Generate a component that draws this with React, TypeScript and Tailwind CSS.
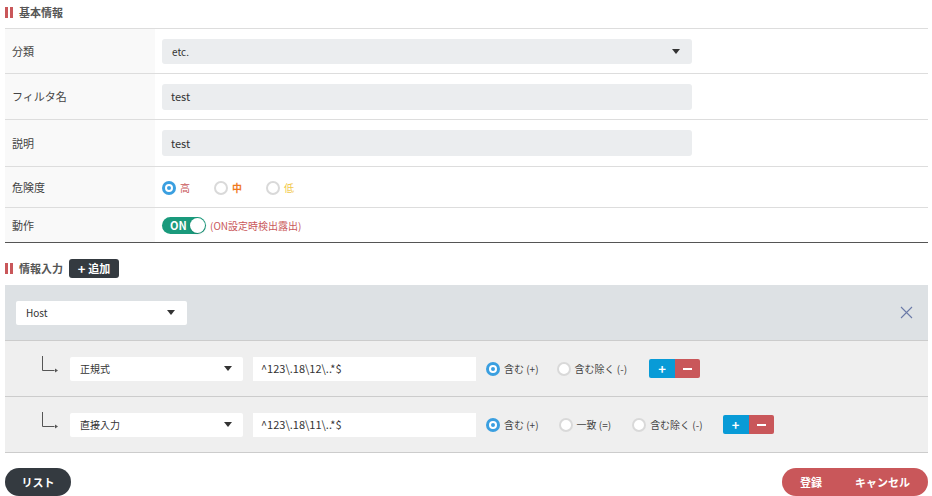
import React from "react";

const font = { fontFamily: '"Noto Sans CJK JP", "Noto Sans", sans-serif' };

function SectionTitle({ children }: { children: React.ReactNode }) {
  return (
    <div className="flex items-center gap-[6px] text-[11px] font-bold text-[#555]">
      <span className="flex gap-[2px]">
        <span className="block h-[11px] w-[3px] bg-[#c9575a]" />
        <span className="block h-[11px] w-[3px] bg-[#c9575a]" />
      </span>
      {children}
    </div>
  );
}

function Caret() {
  return (
    <svg width="8" height="5" viewBox="0 0 8 5">
      <path d="M0 0h8L4 5z" fill="#333" />
    </svg>
  );
}

function Radio({ on, label, color }: { on?: boolean; label: string; color?: string }) {
  return (
    <label className="flex items-center gap-[4px]">
      {on ? (
        <span className="flex h-[14px] w-[14px] items-center justify-center rounded-full bg-[#3a9fe0]">
          <span className="h-[8px] w-[8px] rounded-full border-[2px] border-white bg-[#3a9fe0]" />
        </span>
      ) : (
        <span className="h-[14px] w-[14px] rounded-full border-[2px] border-[#d9d9d9] bg-white" />
      )}
      <span className={`text-[10px] ${color ?? "text-[#444]"}`}>{label}</span>
    </label>
  );
}

function Row({ label, children, h, last }: { label: string; children: React.ReactNode; h: string; last?: boolean }) {
  return (
    <div className={`flex ${h} ${last ? "border-b border-[#555]" : "border-b border-[#ddd]"}`}>
      <div className="flex w-[150px] items-center bg-[#f9f9f9] pl-[7px] text-[11px] text-[#444]">{label}</div>
      <div className="flex flex-1 items-center pl-[7px]">{children}</div>
    </div>
  );
}

function SubRow({ type, value, exact }: { type: string; value: string; exact?: boolean }) {
  return (
    <div className="flex h-[56px] items-center border-b border-[#ccc] bg-[#efefef]">
      <svg width="22" height="20" viewBox="0 0 22 20" className="ml-[34px] mr-[9px] mt-[-8px]">
        <path d="M3.5 1v14.5h12" stroke="#555" strokeWidth="1" fill="none" />
        <path d="M16 13.5l3 2-3 2z" fill="#555" />
      </svg>
      <div className="flex h-[24px] w-[173px] items-center justify-between rounded-[2px] bg-white pl-[10px] pr-[11px] text-[10px] text-[#333]">
        {type}
        <Caret />
      </div>
      <div className="ml-[10px] flex h-[24px] w-[223px] items-center bg-white pl-[8px] text-[11px] text-[#333]">{value}</div>
      <div className="ml-[10px] flex items-center">
        <Radio on label="含む (+)" />
        {exact && (
          <span className="ml-[20px]">
            <Radio label="一致 (=)" />
          </span>
        )}
        <span className={exact ? "ml-[21px]" : "ml-[18px]"}>
          <Radio label="含む除く (-)" />
        </span>
        <div className={`${exact ? "ml-[20px]" : "ml-[22px]"} flex h-[19px] overflow-hidden rounded-[2px]`}>
          <span className="flex w-[26px] items-center justify-center bg-[#089bd7] text-[13px] font-bold leading-none text-white">+</span>
          <span className="flex w-[25px] items-center justify-center bg-[#c9575a]">
            <span className="block h-[2px] w-[9px] bg-white" />
          </span>
        </div>
      </div>
    </div>
  );
}

export default function App() {
  return (
    <div className="h-[496px] w-[932px] bg-white pl-[5px] pr-[4px]" style={font}>
      <div className="flex h-[28px] items-center pb-[4px]">
        <SectionTitle>基本情報</SectionTitle>
      </div>
      <div className="border-t border-[#ddd]">
        <Row label="分類" h="h-[45px]">
          <div className="flex h-[25px] w-[530px] items-center justify-between rounded-[3px] bg-[#ebedef] pl-[10px] pr-[12px] text-[10px] text-[#333]">
            etc.
            <Caret />
          </div>
        </Row>
        <Row label="フィルタ名" h="h-[46px]">
          <div className="flex h-[26px] w-[530px] items-center rounded-[3px] bg-[#ebedef] pl-[9px] text-[11px] text-[#333]">test</div>
        </Row>
        <Row label="説明" h="h-[47px]">
          <div className="flex h-[26px] w-[530px] items-center rounded-[3px] bg-[#ebedef] pl-[9px] text-[11px] text-[#333]">test</div>
        </Row>
        <Row label="危険度" h="h-[41px]">
          <div className="flex items-center gap-[24px] pt-[1px]">
            <Radio on label="高" color="text-[#c9575a]" />
            <Radio label="中" color="text-[#f07a1e] font-bold" />
            <Radio label="低" color="text-[#f2c94c]" />
          </div>
        </Row>
        <Row label="動作" h="h-[35px]" last>
          <div className="flex items-center gap-[4px]">
            <div className="flex h-[17px] w-[44px] items-center justify-between rounded-full bg-[#1a9a7c] pl-[8px] pr-[1px]">
              <span className="text-[11px] font-bold leading-none text-white">ON</span>
              <span className="h-[15px] w-[15px] rounded-full bg-white shadow" />
            </div>
            <span className="text-[10px] text-[#c9575a]">(ON設定時検出露出)</span>
          </div>
        </Row>
      </div>

      <div className="flex h-[42px] items-center gap-[6px] pt-[9px]">
        <SectionTitle>情報入力</SectionTitle>
        <button className="flex h-[19px] w-[50px] items-center justify-center gap-[3px] rounded-[3px] bg-[#343a40] text-[11px] font-bold text-white">
          <span className="text-[13px] leading-none">+</span>追加
        </button>
      </div>

      <div className="flex h-[56px] items-center justify-between border-b border-[#ccc] bg-[#dde1e4] pl-[11px] pr-[15px]">
        <div className="flex h-[24px] w-[171px] items-center justify-between rounded-[2px] bg-white pl-[10px] pr-[12px] text-[10px] text-[#333]">
          Host
          <Caret />
        </div>
        <svg width="13" height="13" viewBox="0 0 13 13">
          <path d="M1 1l11 11M12 1L1 12" stroke="#6b7aa8" strokeWidth="1.1" />
        </svg>
      </div>
      <SubRow type="正規式" value="^123\.18\12\..*$" />
      <SubRow type="直接入力" value="^123\.18\11\..*$" exact />

      <div className="flex items-center justify-between pt-[15px]">
        <button className="flex h-[28px] w-[66px] items-center justify-center rounded-full bg-[#343a40] text-[11px] font-bold text-white">
          リスト
        </button>
        <div className="flex h-[28px] w-[146px] items-center rounded-full bg-[#c9575a] text-[11px] font-bold text-white">
          <span className="ml-[18px]">登録</span>
          <span className="ml-[33px]">キャンセル</span>
        </div>
      </div>
    </div>
  );
}
